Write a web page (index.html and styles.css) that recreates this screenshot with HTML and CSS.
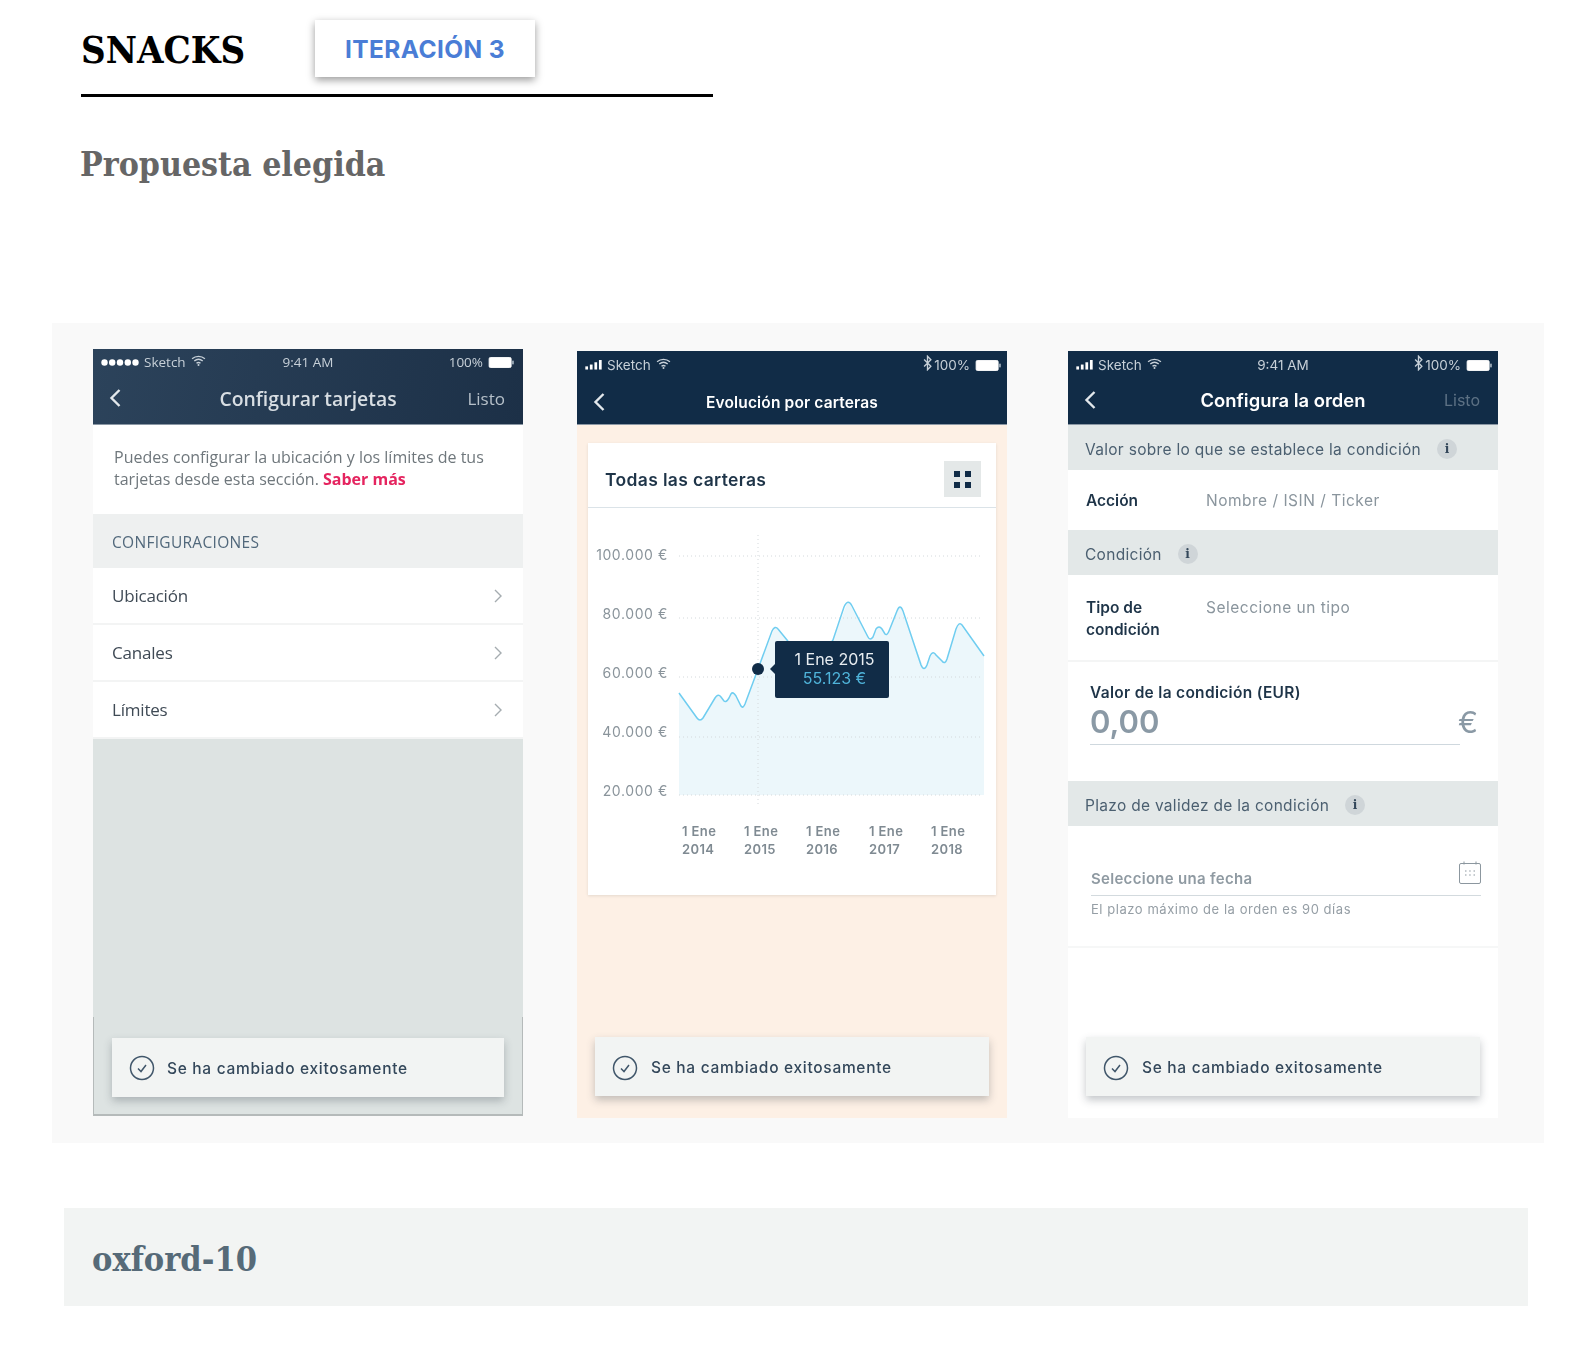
FILE: index.html
```html
<!DOCTYPE html>
<html>
<head>
    <title>Snacks - Iteración 3</title>
    <link rel="stylesheet" href="styles.css">
</head>
<body>
    <svg class="icon-defs" width="0" height="0">
        <symbol id="dots" viewBox="0 0 38 7">
            <circle cx="3.500" cy="3.500" r="3.200" fill="currentColor"/>
            <circle cx="11.200" cy="3.500" r="3.200" fill="currentColor"/>
            <circle cx="19" cy="3.500" r="3.200" fill="currentColor"/>
            <circle cx="26.800" cy="3.500" r="3.200" fill="currentColor"/>
            <circle cx="34.500" cy="3.500" r="3.200" fill="currentColor"/>
        </symbol>
        <symbol id="wifi" viewBox="0 0 16 12">
            <path d="M1 4.2C5 .6 11 .6 15 4.2M3.4 6.6c2.7-2.3 6.500-2.300 9.200 0M5.800 9c1.300-1 3.100-1 4.400 0" fill="none" stroke="currentColor" stroke-width="1.500"/>
            <circle cx="8" cy="10.800" r="1.100" fill="currentColor"/>
        </symbol>
        <symbol id="signal" viewBox="0 0 18 11">
            <rect x="0" y="7" width="3" height="3.500" fill="currentColor"/>
            <rect x="5" y="5" width="3" height="5.500" fill="currentColor"/>
            <rect x="10" y="2.500" width="3" height="8" fill="currentColor"/>
            <rect x="15" y="0" width="3" height="10.500" fill="currentColor"/>
        </symbol>
        <symbol id="bt" viewBox="0 0 8 14">
            <path d="M1 3.800l6 6L4 13V1l3 3.200-6 6" fill="none" stroke="currentColor" stroke-width="1.200"/>
        </symbol>
        <symbol id="battery" viewBox="0 0 28 12">
            <rect x="0.500" y="0.500" width="24" height="11" rx="1.500" fill="#fff" stroke="#fff"/>
            <rect x="25.500" y="4" width="2" height="4" fill="#9aa8b5"/>
        </symbol>
        <symbol id="back" viewBox="0 0 14 20">
            <path d="M11.500 2L3.500 10l8 8" fill="none" stroke="currentColor" stroke-width="2.400"/>
        </symbol>
        <symbol id="chevron" viewBox="0 0 10 16">
            <path d="M2 2l6 6-6 6" fill="none" stroke="currentColor" stroke-width="1.400"/>
        </symbol>
        <symbol id="check" viewBox="0 0 26 26">
            <circle cx="13" cy="13" r="11.500" fill="none" stroke="currentColor" stroke-width="1.500"/>
            <path d="M9 13.500l3 3 5-6.500" fill="none" stroke="currentColor" stroke-width="1.500"/>
        </symbol>
    </svg>

    <header class="title-row">
        <h1 class="title">SNACKS</h1>
        <div class="badge">ITERACIÓN 3</div>
    </header>
    <h2 class="subtitle">Propuesta elegida</h2>

    <section class="panel">
        <!-- pantalla 1 -->
        <div class="phone phone-one">
            <div class="nav nav-gradient">
                <div class="status">
                    <span class="status-left"><svg class="ic-dots"><use href="#dots"/></svg> Sketch <svg class="ic-wifi"><use href="#wifi"/></svg></span>
                    <span class="status-mid">9:41 AM</span>
                    <span class="status-right">100% <svg class="ic-battery"><use href="#battery"/></svg></span>
                </div>
                <div class="nav-bar">
                    <svg class="ic-back"><use href="#back"/></svg>
                    <span class="nav-title nav-title-big">Configurar tarjetas</span>
                    <span class="nav-done">Listo</span>
                </div>
            </div>
            <p class="intro">Puedes configurar la ubicación y los límites de tus<br>tarjetas desde esta sección. <b class="link">Saber más</b></p>
            <div class="config-head">CONFIGURACIONES</div>
            <div class="config-row">Ubicación <svg class="ic-chevron"><use href="#chevron"/></svg></div>
            <div class="config-row">Canales <svg class="ic-chevron"><use href="#chevron"/></svg></div>
            <div class="config-row">Límites <svg class="ic-chevron"><use href="#chevron"/></svg></div>
            <div class="sheet">
                <div class="sheet-foot">
                    <div class="toast">
                        <svg class="ic-check"><use href="#check"/></svg>
                        <span>Se ha cambiado exitosamente</span>
                    </div>
                </div>
            </div>
        </div>

        <!-- pantalla 2 -->
        <div class="phone phone-two">
            <div class="nav">
                <div class="status">
                    <span class="status-left"><svg class="ic-signal"><use href="#signal"/></svg> Sketch <svg class="ic-wifi"><use href="#wifi"/></svg></span>
                    <span class="status-right"><svg class="ic-bt"><use href="#bt"/></svg>100% <svg class="ic-battery"><use href="#battery"/></svg></span>
                </div>
                <div class="nav-bar">
                    <svg class="ic-back"><use href="#back"/></svg>
                    <span class="nav-title nav-title-small">Evolución por carteras</span>
                </div>
            </div>
            <div class="card">
                <div class="card-head">
                    <span class="card-title">Todas las carteras</span>
                    <span class="grid-btn"><i></i><i></i><i></i><i></i></span>
                </div>
                <div class="chart">
                    <svg class="chart-svg" viewBox="0 0 408 386" width="408" height="386">
                        <path class="area" d="M91 184L112 212L130 186L138 193L145 184L155 199L170 160L187 118L199 131L210 146L235 146L245 131L260 92L282 131L291 118L299 126L312 97L336 160L345 144L357 154L371 114L396 147V286H91Z"/>
                        <g class="grid-lines">
                            <line x1="91" y1="47" x2="394" y2="47"/>
                            <line x1="91" y1="109" x2="394" y2="109"/>
                            <line x1="91" y1="168" x2="394" y2="168"/>
                            <line x1="91" y1="228" x2="394" y2="228"/>
                            <line x1="91" y1="286" x2="394" y2="286"/>
                            <line x1="170" y1="26" x2="170" y2="297"/>
                        </g>
                        <path class="line" d="M91 184L109 209Q112 213 115 209L127 189Q130 184 133 188L136 192Q138 194 141 189L143 185Q145 182 148 187L153 197Q155 200 157 195L170 160L184 122Q187 116 190 120L199 131L210 146L235 146L245 131L256 98Q260 89 264 97L280 128Q282 132 285 128L288 120Q291 116 294 120L297 125Q299 127 301 122L309 102Q312 94 315 102L333 156Q336 163 339 156L342 147Q345 141 348 146L354 152Q357 156 359 150L368 120Q371 112 374 116L396 147"/>
                        <circle class="dot" cx="170" cy="160" r="6"/>
                        <g class="y-labels">
                            <text x="80" y="51">100.000 €</text>
                            <text x="80" y="110">80.000 €</text>
                            <text x="80" y="169">60.000 €</text>
                            <text x="80" y="228">40.000 €</text>
                            <text x="80" y="287">20.000 €</text>
                        </g>
                        <g class="x-labels">
                            <text x="94" y="327">1 Ene</text><text x="94" y="345">2014</text>
                            <text x="156" y="327">1 Ene</text><text x="156" y="345">2015</text>
                            <text x="218" y="327">1 Ene</text><text x="218" y="345">2016</text>
                            <text x="281" y="327">1 Ene</text><text x="281" y="345">2017</text>
                            <text x="343" y="327">1 Ene</text><text x="343" y="345">2018</text>
                        </g>
                    </svg>
                    <div class="tooltip">
                        <span>1 Ene 2015</span>
                        <span class="tooltip-value">55.123 €</span>
                    </div>
                </div>
            </div>
            <div class="toast">
                <svg class="ic-check"><use href="#check"/></svg>
                <span>Se ha cambiado exitosamente</span>
            </div>
        </div>

        <!-- pantalla 3 -->
        <div class="phone phone-three">
            <div class="nav">
                <div class="status">
                    <span class="status-left"><svg class="ic-signal"><use href="#signal"/></svg> Sketch <svg class="ic-wifi"><use href="#wifi"/></svg></span>
                    <span class="status-mid">9:41 AM</span>
                    <span class="status-right"><svg class="ic-bt"><use href="#bt"/></svg>100% <svg class="ic-battery"><use href="#battery"/></svg></span>
                </div>
                <div class="nav-bar">
                    <svg class="ic-back"><use href="#back"/></svg>
                    <span class="nav-title nav-title-mid">Configura la orden</span>
                    <span class="nav-done nav-done-dim">Listo</span>
                </div>
            </div>
            <div class="section-head">Valor sobre lo que se establece la condición <span class="info">i</span></div>
            <div class="form-row row-accion">
                <b>Acción</b>
                <span>Nombre / ISIN / Ticker</span>
            </div>
            <div class="section-head">Condición <span class="info">i</span></div>
            <div class="form-row row-tipo">
                <b>Tipo de condición</b>
                <span>Seleccione un tipo</span>
            </div>
            <div class="amount">
                <b>Valor de la condición (EUR)</b>
                <div class="amount-line">
                    <span class="amount-value">0,00</span>
                    <span class="amount-euro">€</span>
                </div>
            </div>
            <div class="section-head">Plazo de validez de la condición <span class="info">i</span></div>
            <div class="date-block">
                <div class="date-line">
                    <span>Seleccione una fecha</span>
                    <svg class="ic-calendar" viewBox="0 0 22 23">
                        <rect x="0.500" y="2.500" width="21" height="20" rx="1.500" fill="none" stroke="#8c979f"/>
                        <path d="M5 0.500v3M17 0.500v3" stroke="#8c979f"/>
                        <path d="M6 10h1.500M10.200 10h1.500M14.500 10h1.500M6 14h1.500M10.200 14h1.500M14.500 14h1.500" stroke="#8c979f"/>
                    </svg>
                </div>
                <div class="date-help">El plazo máximo de la orden es 90 días</div>
            </div>
            <div class="toast">
                <svg class="ic-check"><use href="#check"/></svg>
                <span>Se ha cambiado exitosamente</span>
            </div>
        </div>
    </section>

    <footer class="name-bar">oxford-10</footer>
</body>
</html>
```

FILE: styles.css
```css
body {
    margin: 0;
    background: #fff;
    font-family: "Inter", "Liberation Sans", sans-serif;
}

.icon-defs {
    position: absolute;
}

.title-row {
    display: flex;
    width: 632px;
    height: 94px;
    margin-left: 81px;
    border-bottom: 3px solid #000;
}

.title {
    width: 234px;
    margin: 27px 0 0;
    font-family: "DejaVu Serif Condensed", "DejaVu Serif", serif;
    font-size: 38px;
    line-height: 46px;
    font-weight: 700;
    color: #000;
}

.badge {
    width: 220px;
    height: 57px;
    margin-top: 20px;
    background: #fff;
    box-shadow: 0 3px 8px rgba(0, 0, 0, 0.4);
    color: #4a7dd6;
    font-family: "Inter", sans-serif;
    font-size: 24.500px;
    font-weight: 700;
    line-height: 58px;
    letter-spacing: 0.4px;
    text-align: center;
}

.subtitle {
    margin: 45px 0 0 80px;
    font-family: "DejaVu Serif Condensed", "DejaVu Serif", serif;
    font-size: 33.600px;
    line-height: 44px;
    font-weight: 700;
    color: #666;
}

.panel {
    display: flex;
    align-items: flex-start;
    width: 1492px;
    height: 820px;
    box-sizing: border-box;
    margin: 137px 0 0 52px;
    padding: 26px 0 0 41px;
    background: #f9f9f9;
}

.phone {
    display: flex;
    flex-direction: column;
    width: 430px;
    height: 767px;
    background: #fff;
    color: #33475a;
    filter: blur(0.4px);
}

.phone-one {
    font-family: "Open Sans", sans-serif;
    filter: blur(0.6px);
}

.phone-two {
    margin: 2px 0 0 54px;
    background: #fdf0e5;
}

.phone-three {
    margin: 2px 0 0 61px;
}

.nav {
    flex: none;
    height: 73px;
    background: #112c47;
    border-bottom: 1px solid #8b98a5;
    color: #fff;
}

.nav-gradient {
    height: 75px;
    background: linear-gradient(100deg, #2c435b, #1c3047);
}

.status {
    position: relative;
    display: flex;
    justify-content: space-between;
    height: 28px;
    padding: 0 5px 0 8px;
    font-size: 13.500px;
    line-height: 28px;
    color: #c7d0d8;
}

.phone-one .status {
    height: 26px;
    padding-right: 8px;
    font-family: "Open Sans", sans-serif;
    line-height: 26px;
}

.status-left,
.status-right {
    display: flex;
    align-items: center;
    gap: 5px;
}

.status-mid {
    position: absolute;
    left: 0;
    right: 0;
    text-align: center;
}

.ic-dots {
    width: 38px;
    height: 7px;
    color: #fff;
}

.ic-wifi {
    width: 15px;
    height: 11px;
    margin-top: -3px;
}

.ic-signal {
    width: 17px;
    height: 10px;
    color: #fff;
}

.ic-bt {
    width: 9px;
    height: 16px;
    margin: -4px -3px 0 0;
}

.ic-battery {
    width: 27px;
    height: 11px;
}

.nav-bar {
    position: relative;
    display: flex;
    align-items: center;
    justify-content: space-between;
    height: 46px;
    padding: 0 18px 0 15px;
}

.phone-three .nav-bar {
    height: 42px;
}

.ic-back {
    width: 14px;
    height: 20px;
    color: #e3e8ec;
}

.nav-title {
    position: absolute;
    left: 0;
    right: 0;
    text-align: center;
}

.nav-title-big {
    font-family: "Open Sans", sans-serif;
    font-size: 19.400px;
    font-weight: 600;
    color: #d8dee3;
}

.nav-title-small {
    font-size: 15.500px;
    font-weight: 600;
    letter-spacing: 0.15px;
}

.nav-title-mid {
    font-size: 18.400px;
    font-weight: 600;
}

.nav-done {
    font-family: "Open Sans", sans-serif;
    font-size: 17px;
    color: #b6c0c9;
}

.nav-done-dim {
    font-family: "Inter", sans-serif;
    font-size: 16px;
    color: #5d7184;
}

/* pantalla 1 */
.intro {
    flex: none;
    height: 89px;
    box-sizing: border-box;
    margin: 0;
    padding: 21px 20px 0 21px;
    font-size: 16px;
    line-height: 22px;
    color: #6f777c;
}

.link {
    color: #e5245f;
}

.config-head {
    flex: none;
    height: 54px;
    padding-left: 19px;
    background: #eef0f0;
    font-size: 15.500px;
    line-height: 57px;
    letter-spacing: 0.3px;
    color: #51687b;
}

.config-row {
    flex: none;
    display: flex;
    align-items: center;
    justify-content: space-between;
    height: 55px;
    padding: 0 20px 0 19px;
    border-bottom: 2px solid #f3f4f4;
    font-size: 17px;
    color: #3f4a55;
    font-weight: 500;
    letter-spacing: -0.2px;
}

.ic-chevron {
    width: 10px;
    height: 16px;
    color: #a5acb0;
}

.sheet {
    flex: 1;
    display: flex;
    flex-direction: column;
    justify-content: flex-end;
    background: #dde3e2;
}

.sheet-foot {
    display: flex;
    height: 97px;
    border: 1px solid #b5baba;
    border-width: 0 1px 2px;
}

.toast {
    display: flex;
    align-items: center;
    flex: none;
    gap: 13px;
    height: 59px;
    box-sizing: border-box;
    margin: auto 18px 22px;
    padding: 2px 0 0 17px;
    background: #f2f4f3;
    box-shadow: 0 4px 8px rgba(60, 70, 80, 0.3);
    font-family: "Inter", sans-serif;
    font-size: 15.500px;
    font-weight: 500;
    letter-spacing: 0.7px;
    color: #33475a;
}

.sheet .toast {
    flex: 1;
    gap: 12px;
    margin: 21px 18px 16px;
    padding: 1px 0 0 17px;
}

.ic-check {
    width: 26px;
    height: 26px;
    color: #40566a;
}

/* pantalla 2 */
.card {
    flex: none;
    width: 408px;
    height: 452px;
    margin: 18px 0 0 11px;
    background: #fff;
    box-shadow: 0 1px 3px rgba(0, 0, 0, 0.1);
}

.card-head {
    display: flex;
    align-items: center;
    justify-content: space-between;
    height: 65px;
    box-sizing: border-box;
    padding: 8px 15px 0 17px;
    border-bottom: 1px solid #dbe3e8;
}

.card-title {
    font-size: 17.500px;
    font-weight: 600;
    letter-spacing: 0.35px;
    color: #1e3448;
}

.grid-btn {
    display: grid;
    grid-template-columns: 6px 6px;
    gap: 5px;
    justify-content: center;
    align-content: center;
    width: 37px;
    height: 36px;
    background: #e4e8e8;
}

.grid-btn i {
    width: 6px;
    height: 6px;
    background: #112c47;
}

.chart {
    position: relative;
    margin-top: 1px;
}

.chart-svg {
    display: block;
}

.grid-lines line {
    stroke: #d4d9dc;
    stroke-width: 1;
    stroke-dasharray: 1 3;
}

.area {
    fill: #ecf7fb;
}

.line {
    fill: none;
    stroke: #6fcdf0;
    stroke-width: 1.500;
}

.dot {
    fill: #112c47;
}

.y-labels text {
    font-size: 14px;
    letter-spacing: 0.6px;
    fill: #8a949b;
    text-anchor: end;
}

.x-labels text {
    font-size: 13px;
    font-weight: 600;
    letter-spacing: 0.4px;
    fill: #7f8a92;
}

.tooltip {
    position: absolute;
    left: 187px;
    top: 132px;
    display: flex;
    flex-direction: column;
    align-items: center;
    justify-content: center;
    width: 114px;
    height: 57px;
    box-sizing: border-box;
    padding: 0 0 2px 5px;
    border-radius: 2px;
    background: #112c47;
    font-size: 16px;
    line-height: 19px;
    color: #e8edf1;
}

.tooltip::before {
    content: "";
    position: absolute;
    left: -5px;
    top: 23px;
    border-top: 5px solid transparent;
    border-bottom: 5px solid transparent;
    border-right: 5px solid #112c47;
}

.tooltip-value {
    color: #4fb3d9;
}

/* pantalla 3 */
.section-head {
    flex: none;
    display: flex;
    align-items: center;
    height: 45px;
    box-sizing: border-box;
    padding: 3px 0 0 17px;
    background: #e3e8e8;
    font-size: 15.500px;
    letter-spacing: 0.3px;
    color: #4b5f70;
}

.info {
    width: 20px;
    height: 20px;
    margin-left: 16px;
    border-radius: 50%;
    background: #cfd5d8;
    font-family: "DejaVu Serif", serif;
    font-size: 12px;
    font-weight: 700;
    line-height: 20px;
    text-align: center;
    color: #33475a;
}

.form-row {
    flex: none;
    display: grid;
    grid-template-columns: 120px 1fr;
    box-sizing: border-box;
    padding-left: 18px;
    font-size: 15.500px;
    line-height: 22px;
    letter-spacing: 0.5px;
    color: #8a959d;
}

.form-row b {
    font-weight: 600;
    letter-spacing: 0;
    color: #1e3448;
}

.row-accion {
    height: 60px;
    padding-top: 20px;
}

.row-tipo {
    height: 87px;
    padding-top: 22px;
    grid-template-columns: 120px 210px;
    border-bottom: 2px solid #f4f5f5;
}

.amount {
    flex: none;
    height: 119px;
    box-sizing: border-box;
    padding: 21px 20px 0 22px;
}

.amount b {
    display: block;
    font-size: 15.500px;
    line-height: 20px;
    letter-spacing: 0.3px;
    font-weight: 600;
    color: #1e3448;
}

.amount-line {
    display: flex;
    align-items: center;
    justify-content: space-between;
    height: 42px;
    box-sizing: border-box;
    padding-bottom: 5px;
    width: 388px;
    background: linear-gradient(#cfd8de, #cfd8de) left bottom / 370px 1px no-repeat;
}

.amount-value {
    font-size: 31px;
    font-weight: 600;
    color: #8a99a5;
}

.amount-euro {
    font-size: 30px;
    color: #8a99a5;
}

.date-block {
    flex: none;
    height: 122px;
    box-sizing: border-box;
    padding: 28px 17px 0 23px;
    border-bottom: 2px solid #f6f7f7;
}

.date-line {
    display: flex;
    align-items: flex-end;
    justify-content: space-between;
    height: 34px;
    padding-bottom: 7px;
    border-bottom: 1px solid #d3dade;
    font-size: 15px;
    font-weight: 600;
    letter-spacing: 0.3px;
    color: #8f9aa2;
}

.ic-calendar {
    width: 22px;
    height: 23px;
    margin-bottom: 4px;
}

.date-help {
    margin-top: 4px;
    font-size: 13px;
    line-height: 18px;
    letter-spacing: 0.55px;
    color: #959ea5;
}

.name-bar {
    width: 1464px;
    height: 98px;
    box-sizing: border-box;
    margin: 65px 0 0 64px;
    padding-left: 28px;
    background: #f2f4f3;
    font-family: "DejaVu Serif Condensed", "DejaVu Serif", serif;
    font-size: 34px;
    font-weight: 700;
    line-height: 102px;
    color: #566a78;
}
```
